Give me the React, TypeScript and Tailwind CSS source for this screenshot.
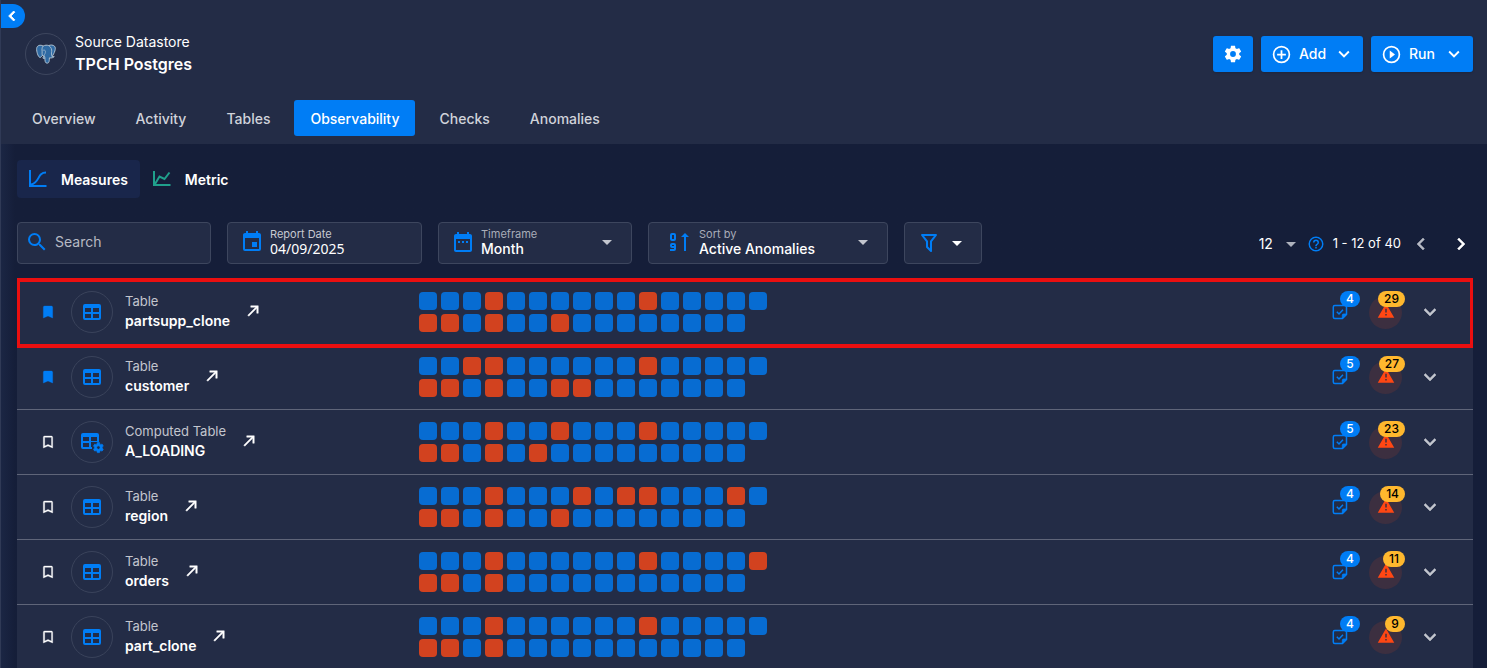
import React from "react";

const RING = "M12,20C7.59,20 4,16.41 4,12C4,7.59 7.59,4 12,4C16.41,4 20,7.59 20,12C20,16.41 16.41,20 12,20M12,2A10,10 0 0,0 2,12A10,10 0 0,0 12,22A10,10 0 0,0 22,12A10,10 0 0,0 12,2";

const ICONS = {
  cog: "M12,15.5A3.5,3.5 0 0,1 8.5,12A3.5,3.5 0 0,1 12,8.5A3.5,3.5 0 0,1 15.5,12A3.5,3.5 0 0,1 12,15.5M19.43,12.97C19.47,12.65 19.5,12.33 19.5,12C19.5,11.67 19.47,11.34 19.43,11L21.54,9.37C21.73,9.22 21.78,8.95 21.66,8.73L19.66,5.27C19.54,5.05 19.27,4.96 19.05,5.05L16.56,6.05C16.04,5.66 15.5,5.32 14.87,5.07L14.5,2.42C14.46,2.18 14.25,2 14,2H10C9.75,2 9.54,2.18 9.5,2.42L9.13,5.07C8.5,5.32 7.96,5.66 7.44,6.05L4.95,5.05C4.73,4.96 4.46,5.05 4.34,5.27L2.34,8.73C2.21,8.95 2.27,9.22 2.46,9.37L4.57,11C4.53,11.34 4.5,11.67 4.5,12C4.5,12.33 4.53,12.65 4.57,12.97L2.46,14.63C2.27,14.78 2.21,15.05 2.34,15.27L4.34,18.73C4.46,18.95 4.73,19.03 4.95,18.95L7.44,17.94C7.96,18.34 8.5,18.68 9.13,18.93L9.5,21.58C9.54,21.82 9.75,22 10,22H14C14.25,22 14.46,21.82 14.5,21.58L14.87,18.93C15.5,18.67 16.04,18.34 16.56,17.94L19.05,18.95C19.27,19.03 19.54,18.95 19.66,18.73L21.66,15.27C21.78,15.05 21.73,14.78 21.54,14.63L19.43,12.97Z",
  plus: RING + "M13,7H11V11H7V13H11V17H13V13H17V11H13V7Z",
  play: RING + "M10,16.5L16,12L10,7.5V16.5Z",
  help: RING + "M11,18H13V16H11V18M12,6A4,4 0 0,0 8,10H10A2,2 0 0,1 12,8A2,2 0 0,1 14,10C14,12 11,11.75 11,15H13C13,12.75 16,12.5 16,10A4,4 0 0,0 12,6Z",
  down: "M7.41,8.58L12,13.17L16.59,8.58L18,10L12,16L6,10L7.41,8.58Z",
  left: "M15.41,16.58L10.83,12L15.41,7.41L14,6L8,12L14,18L15.41,16.58Z",
  right: "M8.59,16.58L13.17,12L8.59,7.41L10,6L16,12L10,18L8.59,16.58Z",
  magnify: "M9.5,3A6.5,6.5 0 0,1 16,9.5C16,11.11 15.41,12.59 14.44,13.73L14.71,14H15.5L20.5,19L19,20.5L14,15.5V14.71L13.73,14.44C12.59,15.41 11.11,16 9.5,16A6.5,6.5 0 0,1 3,9.5A6.5,6.5 0 0,1 9.5,3M9.5,5C7,5 5,7 5,9.5C5,12 7,14 9.5,14C12,14 14,12 14,9.5C14,7 12,5 9.5,5Z",
  calendar: "M19,19H5V8H19M16,1V3H8V1H6V3H5C3.89,3 3,3.89 3,5V19A2,2 0 0,0 5,21H19A2,2 0 0,0 21,19V5C21,3.89 20.1,3 19,3H18V1M17,12H12V17H17V12Z",
  range: "M9 11H7v2h2v-2zm4 0h-2v2h2v-2zm4 0h-2v2h2v-2zm2-7h-1V2h-2v2H8V2H6v2H5c-1.11 0-1.99.9-1.99 2L3 20c0 1.1.89 2 2 2h14c1.1 0 2-.9 2-2V6c0-1.1-.9-2-2-2zm0 16H5V9h14v11z",
  sort: "M19,7V21H17V7H14L18,3L22,7ZM5,3H7A2,2 0 0,1 9,5V9A2,2 0 0,1 7,11H5A2,2 0 0,1 3,9V5A2,2 0 0,1 5,3M5,5V9H7V5ZM5,13H7A2,2 0 0,1 9,15V19A2,2 0 0,1 7,21H3V19H7V18H5A2,2 0 0,1 3,16V15A2,2 0 0,1 5,13M5,15V16H7V15Z",
  filter: "M15,19.88C15.04,20.18 14.94,20.5 14.71,20.71C14.32,21.1 13.69,21.1 13.3,20.71L9.29,16.7C9.06,16.47 8.96,16.16 9,15.87V10.75L4.21,4.62C3.87,4.19 3.95,3.56 4.38,3.22C4.57,3.08 4.78,3 5,3H19C19.22,3 19.43,3.08 19.62,3.22C20.05,3.56 20.13,4.19 19.79,4.62L15,10.75V19.88M7.04,5L11,10.06V15.58L13,17.58V10.05L16.96,5H7.04Z",
  bookmark: "M17,3H7A2,2 0 0,0 5,5V21L12,18L19,21V5C19,3.89 18.1,3 17,3Z",
  bookmarkOutline: "M17,18L12,15.82L7,18V5H17M17,3H7A2,2 0 0,0 5,5V21L12,18L19,21V5C19,3.89 18.1,3 17,3Z",
  table: "M5,4H19A2,2 0 0,1 21,6V18A2,2 0 0,1 19,20H5A2,2 0 0,1 3,18V6A2,2 0 0,1 5,4M5,8V12H11V8H5M13,8V12H19V8H13M5,14V18H11V14H5M13,14V18H19V14H13Z",
  open: "M5,17.59L15.59,7H9V5H19V15H17V8.41L6.41,19L5,17.59Z",
  caret: "M7,10L12,15L17,10H7Z",
  alert: "M13 14H11V9H13M13 18H11V16H13M1 21H23L12 2L1 21Z",
};

function Icon({ name, className = "size-6" }: { name: keyof typeof ICONS; className?: string }) {
  return (
    <svg viewBox="0 0 24 24" fill="currentColor" fillRule="evenodd" aria-hidden="true" className={"shrink-0 " + className}>
      <path d={ICONS[name]} />
    </svg>
  );
}

function ElephantLogo() {
  return (
    <svg viewBox="0 0 24 24" fill="#2f6aa3" stroke="#b9c9d6" strokeWidth="1" strokeLinejoin="round" aria-hidden="true" className="size-[22px]">
      <path d="M9 3.2C6 1.8 2.2 2.2 1.8 6C1.6 9.5 3.2 14.6 5 15.6C6.2 16.2 7 14.8 8 13.6L9.6 14.2V15.4C8.8 15.6 8 16 8.6 16.5C9.4 17 10.2 16.8 10.8 16.4C10.8 18.8 10.8 21.8 13 22C15.2 22 15.6 20.6 15.7 16.2C17.6 16.6 20.4 16 21 14.8C20.4 14.6 19.4 14.9 18.6 14.6C21 11.6 23.4 5.6 21.4 3.6C19.6 1.8 16.8 2 15 2.8C13 2.2 11 2.2 9 3.2Z" />
      <path d="M9 3.2C7.2 5 7.6 8 7.8 9.6C7.9 11.4 7.4 12.4 8 13.6" fill="none" strokeWidth="0.9" />
      <path d="M15 2.8C17.6 4.4 18.6 7.2 18.2 9.4C17.8 11.4 17.8 12.8 18.6 14.6M10.8 16.4C10.9 14.8 10.2 14 9.6 14.2" fill="none" strokeWidth="0.9" />
      <path d="M8.4 8.2C9.6 7.4 11.2 7.6 11.4 9C11.6 11 10.6 12 9.6 14.2" fill="none" strokeWidth="0.7" />
    </svg>
  );
}

function ComputedTableIcon() {
  return (
    <svg viewBox="0 0 24 24" fill="currentColor" fillRule="evenodd" aria-hidden="true" className="size-6 text-[#007df5]">
      <path d="M3,3H17A2,2 0 0,1 19,5V12H17H11V17H12V19H3A2,2 0 0,1 1,17V5A2,2 0 0,1 3,3M3,7V11H9V7H3M11,7V11H17V7H11M3,13V17H9V13H3Z" />
      <g transform="translate(12.4 11.6) scale(0.5)">
        <path d={ICONS.cog} stroke="currentColor" strokeWidth="1.4" />
      </g>
    </svg>
  );
}

function ChecksIcon() {
  return (
    <svg viewBox="0 0 16 16" fill="none" stroke="currentColor" strokeWidth="1.5" aria-hidden="true" className="size-4">
      <path d="M10.5 14.5H2.8Q1.3 14.5 1.3 13V3Q1.3 1.5 2.8 1.5H13Q14.5 1.5 14.5 3V10.5Z" />
      <path d="M14.5 10H11.5Q10.3 10 10.3 11.2V14.5Z" fill="currentColor" strokeWidth="0.8" />
      <path d="M4.8 7.8L7 10L11 5.8" />
    </svg>
  );
}

const tabs = ["Overview", "Activity", "Tables", "Observability", "Checks", "Anomalies"];

type Row = { kind: string; name: string; saved?: boolean; checks: number; anomalies: number; top: number[]; bottom: number[] };

const rows: Row[] = [
  { kind: "Table", name: "partsupp_clone", saved: true, checks: 4, anomalies: 29, top: [3, 10], bottom: [0, 1, 3, 6] },
  { kind: "Table", name: "customer", saved: true, checks: 5, anomalies: 27, top: [2, 3, 10], bottom: [0, 1, 3, 6, 7] },
  { kind: "Computed Table", name: "A_LOADING", checks: 5, anomalies: 23, top: [3, 6, 10], bottom: [0, 1, 3, 5] },
  { kind: "Table", name: "region", checks: 4, anomalies: 14, top: [3, 7, 9, 10, 14], bottom: [0, 1, 3, 6] },
  { kind: "Table", name: "orders", checks: 4, anomalies: 11, top: [3, 10, 15], bottom: [0, 1, 3] },
  { kind: "Table", name: "part_clone", checks: 4, anomalies: 9, top: [3, 10], bottom: [0, 1, 3] },
];

function Days({ count, failed }: { count: number; failed: number[] }) {
  return (
    <div className="flex gap-1">
      {Array.from({ length: count }, (_, i) => (
        <span key={i} className={failed.includes(i) ? "size-[18px] rounded bg-[#d2421f]" : "size-[18px] rounded bg-[#076cd2]"} />
      ))}
    </div>
  );
}

function DatastoreRow({ row, highlighted }: { row: Row; highlighted: boolean }) {
  return (
    <li className="relative flex h-[65px] items-center border-b border-[#5f6579] bg-[#232c46]">
      {highlighted && <div className="pointer-events-none absolute inset-x-0 -top-0.5 -bottom-1 z-10 border-x-[3px] border-y-4 border-[#ea0f10]" />}
      <div className="flex w-[402px] shrink-0 items-center pl-[23px]">
        <button aria-label={"Bookmark " + row.name} className={row.saved ? "text-[#007df5]" : "text-white"}>
          <Icon name={row.saved ? "bookmark" : "bookmarkOutline"} className="size-4 stroke-current stroke-[0.5px]" />
        </button>
        <span className="ml-[15px] flex size-[42px] items-center justify-center rounded-full border border-[#3a435b]">
          {row.kind === "Table" ? <Icon name="table" className="size-6 text-[#007df5]" /> : <ComputedTableIcon />}
        </span>
        <div className="ml-3 pb-0.5 leading-5">
          <div className="text-[13px] text-[#c3c6ce]">{row.kind}</div>
          <div className="text-sm font-semibold text-white">{row.name}</div>
        </div>
        <a href="#" aria-label={"Open " + row.name} className="ml-[14px] pb-0.5 text-white">
          <Icon name="open" className="size-[18px] stroke-current stroke-[0.6px]" />
        </a>
      </div>
      <div className="flex flex-col gap-1">
        <Days count={16} failed={row.top} />
        <Days count={15} failed={row.bottom} />
      </div>
      <div className="ml-auto flex items-center pr-[31px]">
        <button aria-label={row.checks + " active checks"} className="relative text-[#007df5]">
          <ChecksIcon />
          <span className="absolute -top-[13px] left-2 flex h-4 w-5 items-center justify-center rounded-full bg-[#007df5] text-xs font-medium text-white">{row.checks}</span>
        </button>
        <button aria-label={row.anomalies + " active anomalies"} className="relative ml-[21px] flex size-[33px] items-center justify-center rounded-full bg-[#3c2f40] pb-0.5 text-[#ff4713]">
          <Icon name="alert" className="size-[18px]" />
          <span className="absolute -top-[5px] -right-[3px] flex h-4 min-w-5 items-center justify-center rounded-full bg-[#ffb82e] px-1.5 text-xs font-medium text-black">{row.anomalies}</span>
        </button>
        <button aria-label={"Expand " + row.name} className="ml-4 text-[#c3c6ce]">
          <Icon name="down" className="size-6 stroke-current stroke-[0.5px]" />
        </button>
      </div>
    </li>
  );
}

const field = "relative flex h-[42px] items-center rounded border border-[#3d465e] bg-[#232c46]";

export default function App() {
  return (
    <div className="relative h-screen overflow-hidden border-l border-[#303a56] bg-[#151e39] font-['Inter','Noto_Sans',sans-serif] text-white">
      <button aria-label="Collapse sidebar" className="absolute top-1 left-0 z-10 flex h-6 w-6 items-center justify-center rounded-r-full bg-[#007df5] pr-0.5">
        <Icon name="left" className="size-5 stroke-current stroke-1" />
      </button>
      <header className="bg-[#232c46] pt-8 pb-2">
        <div className="flex items-center pr-[14px] pl-6">
          <span className="flex size-[42px] items-center justify-center rounded-full border border-[#3d465e]">
            <ElephantLogo />
          </span>
          <div className="ml-2 leading-[22px]">
            <div className="text-sm">Source Datastore</div>
            <h1 className="text-base font-semibold">TPCH Postgres</h1>
          </div>
          <div className="ml-auto flex gap-2 text-sm font-medium">
            <button aria-label="Settings" className="flex h-9 w-10 items-center justify-center rounded-[3px] bg-[#007df5] shadow">
              <Icon name="cog" className="size-5" />
            </button>
            <button className="flex h-9 w-[102px] items-center rounded-[3px] bg-[#007df5] pl-[10px] shadow">
              <Icon name="plus" className="size-[21px]" />
              <span className="flex-1 pl-[7px] text-left">Add</span>
              <Icon name="down" className="mr-2 size-[22px]" />
            </button>
            <button className="flex h-9 w-[102px] items-center rounded-[3px] bg-[#007df5] pl-[10px] shadow">
              <Icon name="play" className="size-[21px]" />
              <span className="flex-1 pl-[7px] text-left">Run</span>
              <Icon name="down" className="mr-2 size-[22px]" />
            </button>
          </div>
        </div>
        <nav className="mt-6 flex gap-2 pl-[15px]">
          {tabs.map((tab) => (
            <a
              key={tab}
              href="#"
              className={tab === "Observability" ? "flex h-9 items-center rounded-[3px] bg-[#007df5] px-4 pt-0.5 text-sm font-medium" : "flex h-9 items-center px-4 pt-0.5 text-sm font-medium text-[#d0d3da]"}
            >
              {tab}
            </a>
          ))}
        </nav>
      </header>

      <main className="bg-linear-to-r from-[#1b2644] to-[#151e39] to-[14px] pt-4 pr-[14px] pl-4">
        <div className="flex h-[38px] text-sm font-semibold">
          <button className="flex items-center rounded bg-[#19264b] pr-3 pl-[10px]">
            <svg viewBox="0 0 22 22" fill="none" stroke="#007df5" strokeWidth="2" className="size-[22px]" aria-hidden="true">
              <path d="M3 2V18H19.5M4 16.5C13 15 10 4.500 19 4.500" />
            </svg>
            <span className="ml-3 pt-0.5">Measures</span>
          </button>
          <button className="flex items-center px-3">
            <svg viewBox="0 0 20 20" fill="none" stroke="#20a08c" strokeWidth="2" className="size-5" aria-hidden="true">
              <path d="M2 2V16H18.500M3 15L7.500 7.500L12.500 10L17.500 3.500" />
            </svg>
            <span className="ml-[13px] pt-0.5">Metric</span>
          </button>
        </div>

        <div className="mt-6 flex items-center">
          <div className={field + " w-[194px] pb-0.5"}>
            <Icon name="magnify" className="ml-[7px] size-6 text-[#007df5]" />
            <input aria-label="Search" placeholder="Search" className="ml-1.5 w-32 bg-transparent text-sm text-white placeholder:text-[#b7bac4]" />
          </div>
          <div className={field + " ml-4 w-[195px] pb-0.5 pl-3"}>
            <Icon name="calendar" className="size-6 text-[#007df5]" />
            <div className="ml-1.5">
              <label htmlFor="date" className="block text-[11px] leading-[14px] text-[#c6c9d1]">Report Date</label>
              <input id="date" defaultValue="04/09/2025" className="block h-4 w-32 bg-transparent font-['Noto_Sans',sans-serif] text-sm leading-4" />
            </div>
          </div>
          <div className={field + " ml-4 w-[194px] pb-0.5 pl-3"}>
            <Icon name="range" className="size-6 text-[#007df5]" />
            <div className="ml-1.5">
              <label htmlFor="timeframe" className="block text-[11px] leading-[14px] text-[#a9adb9]">Timeframe</label>
              <select id="timeframe" className="block h-4 w-28 appearance-none bg-transparent text-sm leading-4 font-medium">
                <option>Month</option>
              </select>
            </div>
            <Icon name="caret" className="pointer-events-none absolute right-3 size-6 text-[#c3c6ce]" />
          </div>
          <div className={field + " ml-4 w-[240px] pb-0.5 pl-[18px]"}>
            <Icon name="sort" className="size-6 text-[#007df5]" />
            <div className="ml-2">
              <label htmlFor="sort" className="block text-[11px] leading-[14px] text-[#a9adb9]">Sort by</label>
              <select id="sort" className="block h-4 w-36 appearance-none bg-transparent text-sm leading-4 font-medium">
                <option>Active Anomalies</option>
              </select>
            </div>
            <Icon name="caret" className="pointer-events-none absolute right-3 size-6 text-[#c3c6ce]" />
          </div>
          <button aria-label="Filter" className={field + " ml-4 w-[78px] gap-1 pl-3"}>
            <Icon name="filter" className="size-6 text-[#007df5]" />
            <Icon name="caret" />
          </button>

          <div className="ml-auto flex items-center pt-0.5 text-[13px]">
            <div className="relative flex items-center">
              <select aria-label="Rows per page" className="w-10 appearance-none bg-transparent text-sm">
                <option>12</option>
              </select>
              <Icon name="caret" className="pointer-events-none absolute left-5 size-6 text-[#aeb2bd]" />
            </div>
            <Icon name="help" className="ml-2 size-[18px] text-[#007df5]" />
            <span className="ml-2">1 - 12 of 40</span>
            <button aria-label="Previous page" className="ml-2 text-[#b7bac4]"><Icon name="left" className="size-6 stroke-current stroke-[0.5px]" /></button>
            <button aria-label="Next page" className="ml-4"><Icon name="right" className="size-6 stroke-current stroke-[0.5px]" /></button>
          </div>
        </div>

        <ul className="mt-4">
          {rows.map((row, i) => (
            <DatastoreRow key={row.name} row={row} highlighted={i === 0} />
          ))}
        </ul>
      </main>
    </div>
  );
}
